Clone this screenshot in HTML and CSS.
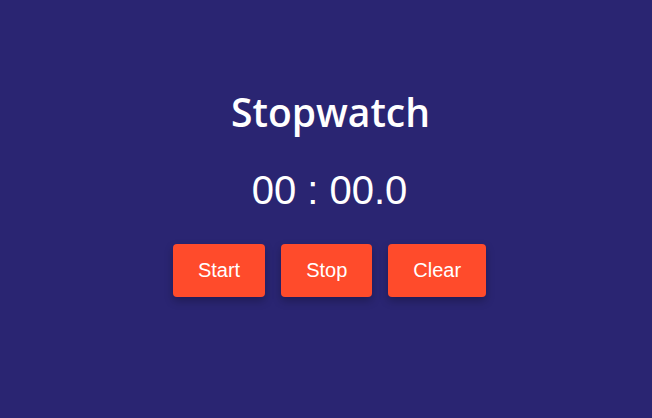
FILE: index.html
```html
<!DOCTYPE html>
<html lang="en">
<head>
<meta charset="utf-8">
<title>Stopwatch</title>
<link rel="stylesheet" href="styles.css">
</head>
<body>
<main class="app">
  <h1 class="title">Stopwatch</h1>
  <div class="time">00 : 00.0</div>
  <div class="controls">
    <button class="btn">Start</button>
    <button class="btn">Stop</button>
    <button class="btn">Clear</button>
  </div>
</main>
</body>
</html>
```
FILE: styles.css
```css
html, body {
  margin: 0;
  padding: 0;
}
body {
  background: #2a2572;
  color: #ffffff;
  font-family: "Liberation Sans", Arial, sans-serif;
  min-height: 100vh;
}
.app {
  display: flex;
  flex-direction: column;
  align-items: center;
  justify-content: center;
  min-height: 100vh;
  padding-left: 7px;
  box-sizing: border-box;
}
.title {
  font-family: "Open Sans", "Noto Sans", sans-serif;
  font-weight: 600;
  font-size: 39px;
  line-height: 54px;
  margin: 3px 0 28px;
  padding-left: 2px;
}
.time {
  font-size: 40px;
  line-height: 46px;
  margin: 0 0 31px;
}
.controls {
  display: flex;
  gap: 16px;
  margin-bottom: 40px;
}
.btn {
  font-family: "Liberation Sans", Arial, sans-serif;
  font-size: 20px;
  line-height: 23px;
  color: #ffffff;
  background: #ff4b2b;
  border: none;
  border-radius: 4px;
  padding: 15px 25px;
  box-shadow: 0 4px 8px rgba(0, 0, 0, 0.25);
  cursor: pointer;
}
```
